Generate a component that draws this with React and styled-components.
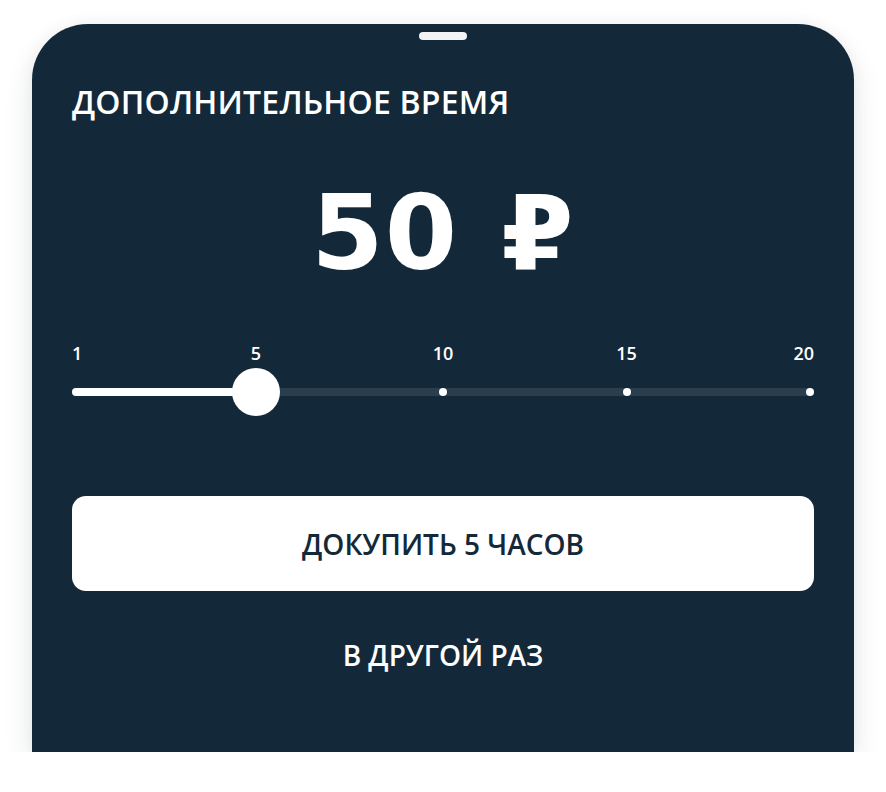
import styled, { createGlobalStyle } from "styled-components";

const GlobalStyle = createGlobalStyle`
  html, body {
    margin: 0;
    background: #ffffff;
  }
  body {
    font-family: "Open Sans", "Liberation Sans", sans-serif;
  }
`;

const STOPS = [1, 5, 10, 15, 20];
const STOP_POSITIONS = [0, 0.245, 0.5, 0.75, 1];
const CURRENT = 1;

const Sheet = styled.div`
  width: 822px;
  height: 728px;
  margin: 24px 0 0 32px;
  box-sizing: border-box;
  padding: 8px 40px 0;
  background: #13293a;
  border-radius: 56px 56px 0 0;
  box-shadow: 0 14px 30px rgba(19, 41, 58, 0.1), 0 0 16px rgba(19, 41, 58, 0.05);
  color: #ffffff;
  display: flex;
  flex-direction: column;
`;

const Handle = styled.div`
  align-self: center;
  width: 48px;
  height: 8px;
  border-radius: 4px;
  background: #f2f4f6;
`;

const Title = styled.h2`
  margin: 43px 0 0;
  font-size: 32px;
  line-height: 38px;
  font-weight: 600;
  letter-spacing: 0.2px;
  text-transform: uppercase;
`;

const Price = styled.div`
  margin-top: 60px;
  text-align: center;
  font-family: "DejaVu Sans", "Open Sans", sans-serif;
  font-size: 104px;
  line-height: 104px;
  font-weight: 700;
  letter-spacing: 1px;
  word-spacing: 6px;
`;

const Slider = styled.div`
  margin-top: 59px;
  display: flex;
  flex-direction: column;
  gap: 6px;
`;

const Labels = styled.div`
  position: relative;
  height: 18px;
`;

const Label = styled.span`
  position: absolute;
  top: 0;
  font-size: 18px;
  line-height: 18px;
  font-weight: 600;
  transform: translateX(${(p) => (p.$edge === "start" ? "0" : p.$edge === "end" ? "-100%" : "-50%")});
`;

const Rail = styled.div`
  position: relative;
  height: 48px;
`;

const Track = styled.div`
  position: absolute;
  left: 0;
  right: 0;
  top: 20px;
  height: 8px;
  border-radius: 4px;
  background: #2a3e4d;
`;

const Fill = styled.div`
  position: absolute;
  left: 0;
  top: 20px;
  height: 8px;
  border-radius: 4px;
  background: #ffffff;
`;

const Dot = styled.span`
  position: absolute;
  top: 20px;
  width: 8px;
  height: 8px;
  margin-left: -4px;
  border-radius: 50%;
  background: #ffffff;
`;

const Thumb = styled.span`
  position: absolute;
  top: 0;
  width: 48px;
  height: 48px;
  margin-left: -24px;
  border-radius: 50%;
  background: #ffffff;
`;

const BuyButton = styled.button`
  margin-top: 80px;
  height: 95px;
  border: none;
  border-radius: 14px;
  background: #ffffff;
  color: #13293a;
  font-family: inherit;
  font-size: 28px;
  font-weight: 600;
  text-transform: uppercase;
  cursor: pointer;
`;

const LaterButton = styled.button`
  margin-top: 45px;
  align-self: center;
  border: none;
  background: none;
  padding: 0;
  color: #ffffff;
  font-family: inherit;
  font-size: 28px;
  line-height: 38px;
  font-weight: 600;
  text-transform: uppercase;
  cursor: pointer;
`;

// offset along the rail, keeping the ends inside the rounded caps
const at = (pct) => `calc(4px + (100% - 8px) * ${pct})`;

const HoursSlider = ({ stops, positions, current }) => (
  <Slider>
    <Labels>
      {stops.map((value, i) => (
        <Label
          key={value}
          $edge={i === 0 ? "start" : i === stops.length - 1 ? "end" : "mid"}
          style={{ left: i === 0 ? 0 : i === stops.length - 1 ? "100%" : at(positions[i]) }}
        >
          {value}
        </Label>
      ))}
    </Labels>
    <Rail>
      <Track />
      <Fill style={{ width: at(positions[current]) }} />
      {stops.map((value, i) =>
        i > current ? <Dot key={value} style={{ left: at(positions[i]) }} /> : null
      )}
      <Thumb style={{ left: at(positions[current]) }} />
    </Rail>
  </Slider>
);

export default function App() {
  const hours = STOPS[CURRENT];
  return (
    <>
      <GlobalStyle />
      <Sheet>
        <Handle />
        <Title>Дополнительное время</Title>
        <Price>{hours * 10} ₽</Price>
        <HoursSlider stops={STOPS} positions={STOP_POSITIONS} current={CURRENT} />
        <BuyButton>Докупить {hours} часов</BuyButton>
        <LaterButton>В другой раз</LaterButton>
      </Sheet>
    </>
  );
}
